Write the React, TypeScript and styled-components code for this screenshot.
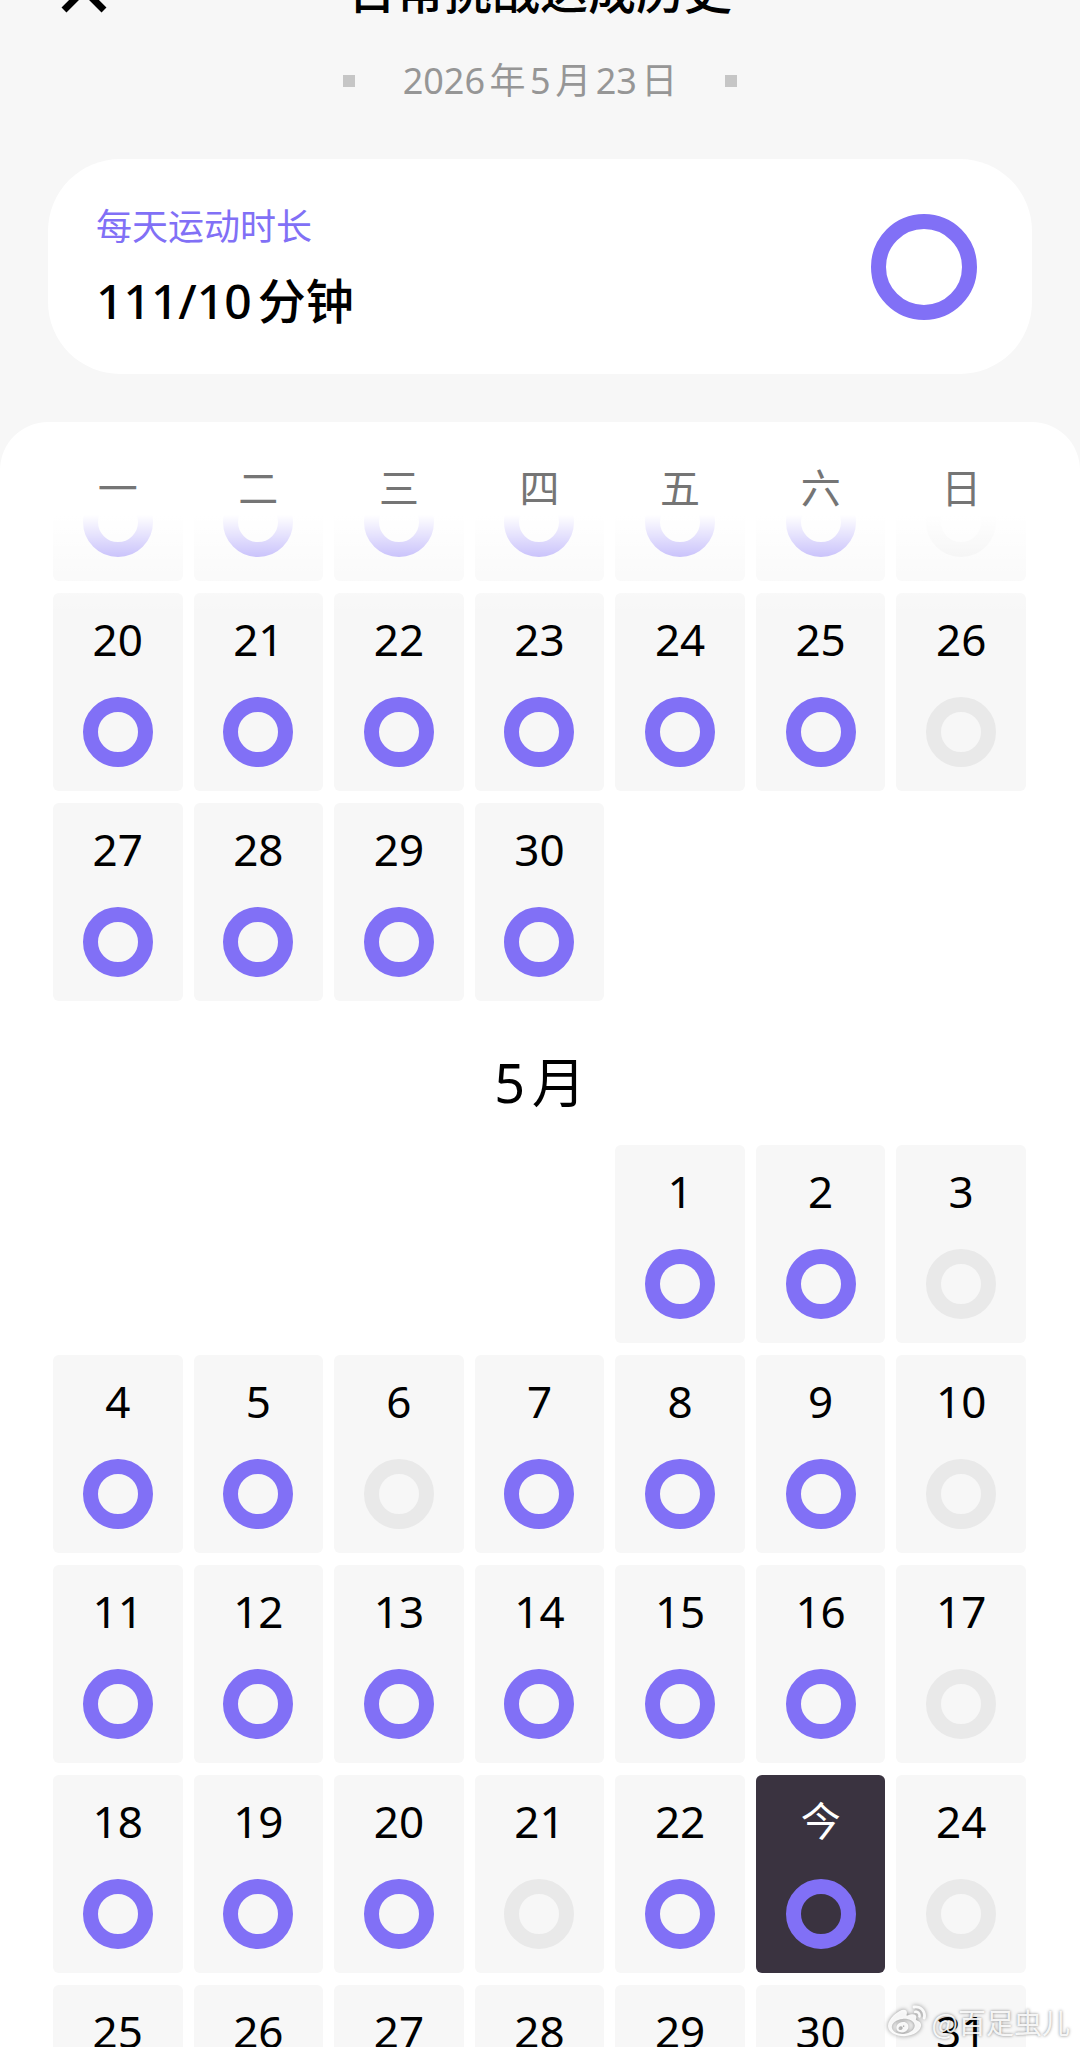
import React from "react";
import styled, { createGlobalStyle } from "styled-components";
import { FaWeibo } from "react-icons/fa";

const color = {
  page: "#f7f7f7",
  surface: "#ffffff",
  accent: "#8170f6",
  idle: "#e9e9e9",
  today: "#3a3340",
  ink: "#000000",
  weekday: "#757575",
  muted: "#969696",
  dot: "#c6c6c6",
};

const GlobalStyle = createGlobalStyle`
  *, *::before, *::after { box-sizing: border-box; }
  body {
    margin: 0;
    background: ${color.page};
    color: ${color.ink};
    font-family: "Noto Sans", "Noto Sans CJK SC", sans-serif;
  }
  h1, h2, p { margin: 0; font-weight: 400; }
  button { font: inherit; color: inherit; border: 0; padding: 0; background: none; }
`;

const Page = styled.main`
  position: relative;
  display: flex;
  flex-direction: column;
  height: 100vh;
  overflow: hidden;
`;

const TitleBar = styled.header`
  display: grid;
  grid-template-columns: 72px 1fr 72px;
  align-content: end;
  height: 27px;
  padding: 0 48px;
`;

const CloseButton = styled.button`
  display: flex;
  align-items: center;
  justify-content: center;
  height: 72px;
  padding-bottom: 2px;
  svg { display: block; }
`;

const Title = styled.h1`
  font-size: 48px;
  line-height: 72px;
  font-weight: 500;
  text-align: center;
`;

const DateLine = styled.div`
  display: flex;
  align-items: center;
  justify-content: center;
  gap: 48px;
  height: 108px;
  font-size: 36px;
  line-height: 48px;
  color: ${color.muted};
  text-autospace: normal;
`;

const Dot = styled.span`
  width: 12px;
  height: 12px;
  background: ${color.dot};
`;

const SummaryCard = styled.section`
  display: flex;
  align-items: center;
  justify-content: space-between;
  margin: 24px 48px 48px;
  padding: 36px 55px 36px 48px;
  min-height: 215px;
  border-radius: 72px;
  background: ${color.surface};
`;

const SummaryLabel = styled.p`
  font-size: 36px;
  line-height: 60px;
  color: ${color.accent};
`;

const SummaryValue = styled.p`
  margin-top: 8px;
  font-size: 48px;
  line-height: 72px;
  font-weight: 500;
  text-autospace: normal;
`;

const Ring = styled.span<{ $size: number; $done: boolean }>`
  display: block;
  flex: none;
  width: ${(p) => p.$size}px;
  height: ${(p) => p.$size}px;
  border: 15px solid ${(p) => (p.$done ? color.accent : color.idle)};
  border-radius: 50%;
`;

const Panel = styled.section`
  flex: 1;
  min-height: 0;
  overflow: hidden;
  border-radius: 48px 48px 0 0;
  background: ${color.surface};
`;

const Week = styled.div`
  display: grid;
  grid-template-columns: repeat(7, 1fr);
  gap: 12px 11px;
  padding: 0 54px 0 53px;
`;

const Weekdays = styled(Week)`
  padding-top: 38px;
  height: 93px;
  font-size: 40px;
  line-height: 56px;
  text-align: center;
  color: ${color.weekday};
`;

const Scroller = styled.div`
  position: relative;
  &::before {
    content: "";
    position: absolute;
    z-index: 1;
    inset: 0 0 auto;
    height: 100px;
    background: linear-gradient(#ffffff, #ffffff00);
    pointer-events: none;
  }
`;

const DayCell = styled.button<{ $today?: boolean; $start?: number }>`
  display: flex;
  flex-direction: column;
  align-items: center;
  justify-content: space-between;
  height: 198px;
  padding: 16px 0 24px;
  border-radius: 6px;
  background: ${(p) => (p.$today ? color.today : color.page)};
  color: ${(p) => (p.$today ? color.surface : color.ink)};
  font-size: ${(p) => (p.$today ? 40 : 44)}px;
  line-height: 60px;
  grid-column-start: ${(p) => p.$start ?? "auto"};
`;

const CutCell = styled(DayCell)`
  justify-content: flex-end;
  height: 66px;
  padding-top: 0;
  border-radius: 0 0 6px 6px;
  overflow: hidden;
`;

const CutWeek = styled(Week)`
  margin-bottom: 12px;
`;

const MonthTitle = styled.h2`
  padding: 45px 0 27px;
  font-size: 54px;
  line-height: 72px;
  text-align: center;
  text-autospace: normal;
`;

const Watermark = styled.div`
  position: absolute;
  z-index: 2;
  right: 10px;
  bottom: 6px;
  display: flex;
  align-items: center;
  gap: 6px;
  font-family: "Noto Sans CJK SC", sans-serif;
  font-size: 28px;
  line-height: 36px;
  color: #ffffffe6;
  text-shadow: 0 0 3px #00000080;
  svg { filter: drop-shadow(0 0 2px #00000080); }
`;

const weekdays = ["一", "二", "三", "四", "五", "六", "日"];
const range = (from: number, to: number) =>
  Array.from({ length: to - from + 1 }, (_, i) => from + i);

type MonthProps = { from: number; to: number; start: number; missed: number[]; today?: number };

function Month({ from, to, start, missed, today }: MonthProps) {
  return (
    <Week>
      {range(from, to).map((day) => (
        <DayCell
          key={day}
          type="button"
          $today={day === today}
          $start={day === from ? start : undefined}
        >
          <span>{day === today ? "今" : day}</span>
          <Ring $size={70} $done={!missed.includes(day)} />
        </DayCell>
      ))}
    </Week>
  );
}

export default function App() {
  return (
    <Page>
      <GlobalStyle />
      <TitleBar>
        <CloseButton type="button" aria-label="关闭">
          <svg width="48" height="48" viewBox="0 0 48 48" fill="none" stroke="#000" strokeWidth="7">
            <path d="M4 4 44 44M44 4 4 44" />
          </svg>
        </CloseButton>
        <Title>日常挑战达成历史</Title>
      </TitleBar>
      <DateLine>
        <Dot />
        <span>2026年5月23日</span>
        <Dot />
      </DateLine>
      <SummaryCard>
        <div>
          <SummaryLabel>每天运动时长</SummaryLabel>
          <SummaryValue>111/10分钟</SummaryValue>
        </div>
        <Ring $size={106} $done />
      </SummaryCard>
      <Panel>
        <Weekdays>
          {weekdays.map((name) => (
            <span key={name}>{name}</span>
          ))}
        </Weekdays>
        <Scroller>
          <CutWeek>
            {range(13, 19).map((day) => (
              <CutCell key={day} type="button" aria-label={`4月${day}日`}>
                <Ring $size={70} $done={day !== 19} />
              </CutCell>
            ))}
          </CutWeek>
          <Month from={20} to={30} start={1} missed={[26]} />
          <MonthTitle>5月</MonthTitle>
          <Month from={1} to={31} start={5} missed={[3, 6, 10, 17, 21, 24, 31]} today={23} />
        </Scroller>
      </Panel>
      <Watermark>
        <FaWeibo size={38} />
        <span>@百足虫儿</span>
      </Watermark>
    </Page>
  );
}
